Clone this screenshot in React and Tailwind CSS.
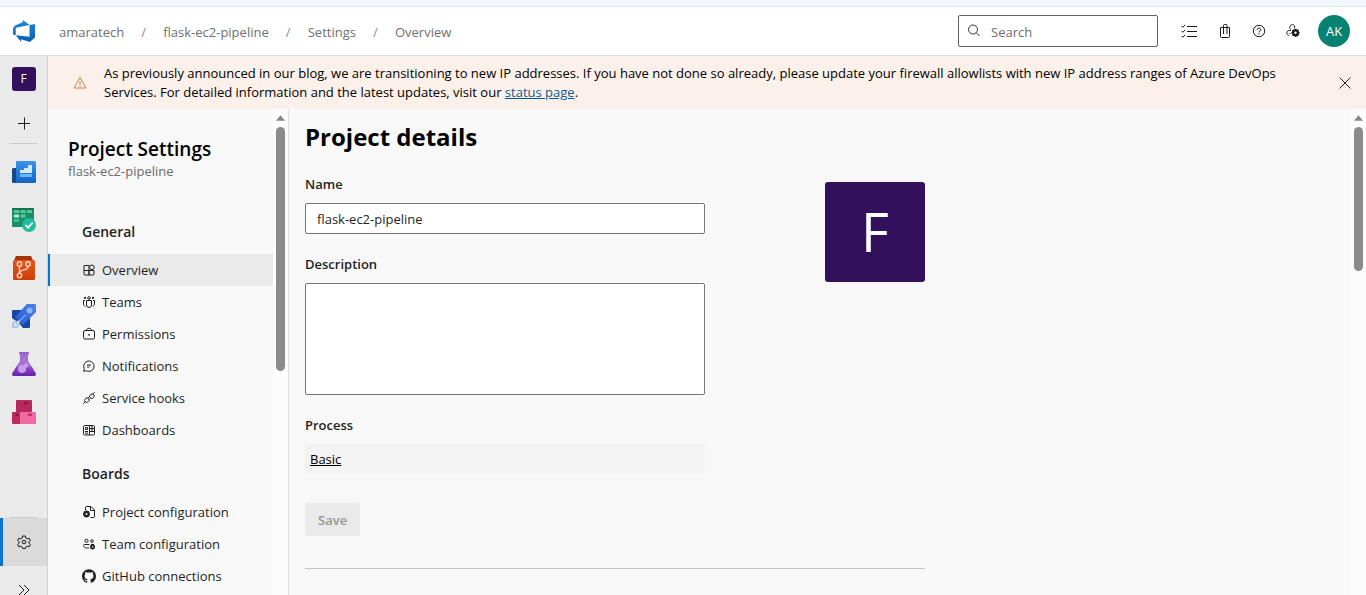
import React from "react";
import { SiGithub } from "react-icons/si";

function Line({ size = 14, box = 14, children, className = "" }) {
  return (
    <svg width={size} height={size} viewBox={`0 0 ${box} ${box}`} fill="none" stroke="currentColor" strokeWidth="1" className={`shrink-0 ${className}`} aria-hidden="true">
      {children}
    </svg>
  );
}

const gearTeeth = [0, 45, 90, 135];
function Gear({ x, y, r }) {
  return (
    <g>
      <circle cx={x} cy={y} r={r * 0.6} strokeWidth={r * 0.6} />
      {gearTeeth.map((a) => (
        <path key={a} d={`M${x} ${y - r}v${r * 0.35}M${x} ${y + r}v${-r * 0.35}`} strokeWidth={r * 0.45} transform={`rotate(${a} ${x} ${y})`} />
      ))}
    </g>
  );
}

function AzureLogo() {
  return (
    <svg width="22" height="22" viewBox="0 0 24 24" aria-hidden="true">
      <defs>
        <linearGradient id="logo" x1="0" y1="1" x2="0" y2="0">
          <stop offset="0" stopColor="#0b5fb4" />
          <stop offset="1" stopColor="#1a86dc" />
        </linearGradient>
      </defs>
      <path fill="url(#logo)" d="M0 8.877L2.247 5.91l8.405-3.416V.022l7.37 5.393L2.966 8.338v8.225L0 15.707zm24-4.45v14.651l-5.753 4.9-9.303-3.057v3.056l-5.978-7.416 15.057 1.798V5.415z" />
    </svg>
  );
}

function OverviewRail() {
  return (
    <svg width="24" height="24" viewBox="0 0 24 24" aria-hidden="true">
      <defs>
        <linearGradient id="ovw" x1="0" y1="0" x2="0" y2="1">
          <stop offset="0" stopColor="#3a94ee" />
          <stop offset="1" stopColor="#1263c4" />
        </linearGradient>
      </defs>
      <path d="M1.500 8H5v15H1.500A1.500 1.500 0 0 1 0 21.500v-12A1.500 1.500 0 0 1 1.500 8z" fill="#114a8c" />
      <path d="M5 1h17.500A1.500 1.500 0 0 1 24 2.500v19a1.500 1.500 0 0 1-1.500 1.500H2.500C4 22.700 4 21.500 4 20V2a1 1 0 0 1 1-1z" fill="url(#ovw)" />
      <path d="M8 10h4v3H8zM16 5h4v8h-4zM12 8h4v5h-4z" fill="#cfeaff" />
      <path d="M8 14h12v3H8z" fill="#66b6f7" />
    </svg>
  );
}

function BoardsRail() {
  return (
    <svg width="24" height="24" viewBox="0 0 24 24" aria-hidden="true">
      <rect x="0" y="0" width="22" height="19" rx="1" fill="#1c8f6a" />
      <path d="M0 1a1 1 0 0 1 1-1h20a1 1 0 0 1 1 1v1H0z" fill="#137353" />
      <path d="M2 2h5v3H2zM8.500 2h5v3h-5zM15 2h5v3h-5z" fill="#54c99c" />
      <path d="M2 6.500h5v3H2z" fill="#a3f3d5" />
      <path d="M8.500 6.500h5v3h-5z" fill="#54c99c" />
      <path d="M2 11h5v3H2z" fill="#46b98c" />
      <circle cx="17" cy="17" r="7" fill="#22bd9b" />
      <path d="M13.500 17l2.500 2.600 4.800-5" fill="none" stroke="#fff" strokeWidth="1.800" />
    </svg>
  );
}

function ReposRail() {
  return (
    <svg width="24" height="24" viewBox="0 0 24 24" aria-hidden="true">
      <defs>
        <linearGradient id="rep" x1="0" y1="0" x2="0" y2="1">
          <stop offset="0" stopColor="#e0561f" />
          <stop offset="1" stopColor="#cf3d08" />
        </linearGradient>
      </defs>
      <path d="M4.500 0h14a1 1 0 0 1 1 1L21 4.500H2L3.500 1a1 1 0 0 1 1-1z" fill="#a33408" />
      <path d="M1 5.500A1.500 1.500 0 0 1 2.500 4h19A1.500 1.500 0 0 1 23 5.500v17a1.500 1.500 0 0 1-1.500 1.500h-19A1.500 1.500 0 0 1 1 22.500z" fill="url(#rep)" />
      <g fill="none" stroke="#fbd3bf" strokeWidth="1.400">
        <circle cx="7.500" cy="8" r="2.200" />
        <circle cx="16" cy="8" r="2.200" />
        <circle cx="7.500" cy="19.500" r="2.200" />
        <path d="M7.500 10.200v7.100M16 10.200c0 5-8 2.500-8.500 7.100" />
      </g>
    </svg>
  );
}

function PipelinesRail() {
  return (
    <svg width="24" height="24" viewBox="0 0 24 24" aria-hidden="true">
      <defs>
        <linearGradient id="pip" x1="0" y1="1" x2="1" y2="0">
          <stop offset="0" stopColor="#2459c9" />
          <stop offset="1" stopColor="#4d83ee" />
        </linearGradient>
      </defs>
      <path d="M1 6h10L5 18 0 14V7a1 1 0 0 1 1-1zM18 12v11a1 1 0 0 1-1 1h-6l-4-5z" fill="#1747a6" />
      <path d="M15 0h8a1 1 0 0 1 1 1v7L11 21l-8-8z" fill="url(#pip)" />
      <circle cx="17.500" cy="6.500" r="3" fill="#8db1fa" />
      <path d="M13.500 11l-6.500 6.500" stroke="#7fa5f5" strokeWidth="1.500" />
      <path d="M0 18h2v4h4v2H0zM3 15.500l5.500 5.500-2 1.500L2 18z" fill="#a9c4f7" />
    </svg>
  );
}

function TestRail() {
  return (
    <svg width="24" height="24" viewBox="0 0 24 24" aria-hidden="true">
      <defs>
        <linearGradient id="tst" x1="0" y1="0" x2="0" y2="1">
          <stop offset="0" stopColor="#9450c8" />
          <stop offset="1" stopColor="#6420b0" />
        </linearGradient>
      </defs>
      <path d="M8 2h8v7l7.600 12c.9 1.500 0 3-1.600 3H2c-1.600 0-2.500-1.500-1.600-3L8 9z" fill="#a271d2" />
      <path d="M4.500 14.500h15l4 6.500c.9 1.500 0 3-1.500 3H2c-1.500 0-2.400-1.500-1.500-3z" fill="url(#tst)" />
      <rect x="7" y="0" width="10" height="2.500" rx="0.800" fill="#9a5fce" />
      <circle cx="10" cy="17" r="4" fill="#c79bef" />
      <circle cx="14" cy="13.500" r="2.300" fill="#c79bef" />
    </svg>
  );
}

function ArtifactsRail() {
  return (
    <svg width="24" height="24" viewBox="0 0 24 24" aria-hidden="true">
      <rect x="4" y="0" width="16" height="12" rx="0.800" fill="#b8295f" />
      <rect x="12" y="2" width="4" height="2.500" fill="#8f1746" />
      <rect x="0" y="12" width="8.500" height="12" rx="0.800" fill="#bb2a60" />
      <rect x="8" y="12" width="16" height="12" rx="0.800" fill="#ef6aa1" />
      <rect x="3.500" y="13.500" width="3" height="2.500" fill="#8f1746" />
      <rect x="16" y="13.500" width="4" height="2.500" fill="#c2306d" />
    </svg>
  );
}

const icons = {
  overview: (
    <Line>
      <path d="M2 2.500h5v5H2zM2 7.500h5v4.500H3a1 1 0 0 1-1-1zM7 7.500h5V11a1 1 0 0 1-1 1H7z" />
      <circle cx="9.900" cy="4.300" r="2.300" />
    </Line>
  ),
  teams: (
    <Line>
      <circle cx="7" cy="3" r="1.300" />
      <circle cx="3" cy="2.900" r="1.100" fill="currentColor" stroke="none" />
      <circle cx="11" cy="2.900" r="1.100" fill="currentColor" stroke="none" />
      <path d="M4.500 5.500h5V10a2.500 2.500 0 0 1-5 0zM3 5.500H1.500V9c0 1.200.7 2 1.800 2.200M11 5.500h1.500V9c0 1.200-.7 2-1.800 2.200" />
    </Line>
  ),
  permissions: (
    <Line>
      <rect x="1.500" y="3.500" width="11" height="8.500" rx="1.500" />
      <path d="M4.500 3.500C4.500.5 9.500.5 9.500 3.500" />
      <circle cx="7" cy="7.800" r="0.900" fill="currentColor" stroke="none" />
    </Line>
  ),
  notifications: (
    <Line>
      <path d="M1.700 12.300l.6-2.700A5.200 5.200 0 1 1 4.500 11.800zM5 6h4M5 8h2.500" />
    </Line>
  ),
  hooks: (
    <Line>
      <path d="M1.300 12.700l2-2M12.700 1.300l-2 2M7.200 5l1.700-1.600a2 2 0 0 1 2.800 2.800L10 7.900zM5 6.500L3 8.200A2 2 0 0 0 5.800 11l1.900-1.900zM5.800 7.200l1.400-1.400M7 8.500l1.400-1.400" />
    </Line>
  ),
  dashboards: (
    <Line>
      <rect x="1.500" y="2.500" width="11" height="9.500" rx="1.200" />
      <path d="M7.500 2.500V12M7.500 5.500h5M7.500 8.500h5M10 2.500v6M3.500 4.500h2v2h-2zM3 8.500h3M3 10.200h3" />
    </Line>
  ),
  projectConfig: (
    <Line>
      <path d="M3.500 5V2.500a1 1 0 0 1 1-1H9l3.500 3.500v6.500a1 1 0 0 1-1 1H8.500M8.500 1.500v4h4" />
      <Gear x={4.500} y={9} r={3.500} />
    </Line>
  ),
  teamConfig: (
    <Line>
      <circle cx="4.500" cy="3.800" r="1.600" />
      <circle cx="10" cy="4.100" r="1.300" />
      <path d="M7.500 7.500H2.200C1 7.500 1.200 11 4.500 11H7M9 7.500h3" />
      <Gear x={10.500} y={10} r={2.600} />
    </Line>
  ),
  github: <SiGithub size={14} className="shrink-0" aria-hidden="true" />,
};

const groups = [
  {
    title: "General",
    items: [
      ["overview", "Overview"],
      ["teams", "Teams"],
      ["permissions", "Permissions"],
      ["notifications", "Notifications"],
      ["hooks", "Service hooks"],
      ["dashboards", "Dashboards"],
    ],
  },
  {
    title: "Boards",
    items: [
      ["projectConfig", "Project configuration"],
      ["teamConfig", "Team configuration"],
      ["github", "GitHub connections"],
    ],
  },
];

const services = [
  ["Overview", OverviewRail],
  ["Boards", BoardsRail],
  ["Repos", ReposRail],
  ["Pipelines", PipelinesRail],
  ["Test Plans", TestRail],
  ["Artifacts", ArtifactsRail],
];

const crumbs = ["amaratech", "flask-ec2-pipeline", "Settings", "Overview"];

function ScrollTrack({ thumb }) {
  return (
    <div className="flex w-[15px] shrink-0 flex-col items-center bg-[#fcfcfc] pt-1.5" aria-hidden="true">
      <svg width="9" height="6" viewBox="0 0 10 6" className="mb-1.5 shrink-0">
        <path d="M5 0l5 6H0z" fill="#868686" />
      </svg>
      <div className={`w-[9px] shrink-0 rounded-full bg-[#8b8b8b] ${thumb}`} />
    </div>
  );
}

function Header() {
  return (
    <header className="flex h-[49px] shrink-0 items-center border-b border-[#dcdcdc] bg-white pl-[13px] pr-4">
      <a href="#home" aria-label="Azure DevOps" className="mr-6 shrink-0">
        <AzureLogo />
      </a>
      <nav aria-label="Breadcrumb" className="pt-0.5">
        <ol className="flex items-center text-[#6f6f6f]">
          {crumbs.map((c, i) => (
            <li key={c} className="flex">
              {i > 0 && <span className="w-[39px] text-center text-[#8a8a8a]">/</span>}
              <a href="#crumb">{c}</a>
            </li>
          ))}
        </ol>
      </nav>
      <label className="ml-auto mr-3 flex h-8 w-[200px] items-center gap-2.5 rounded-xs border border-[#616161] px-2 text-[#333]">
        <Line size={14}>
          <circle cx="6" cy="5.500" r="4.500" />
          <path d="M9.200 8.700l3.300 3.300" />
        </Line>
        <input type="search" aria-label="Search" placeholder="Search" className="w-full min-w-0 bg-transparent pt-0.5 outline-none placeholder:text-[#707070]" />
      </label>
      <div className="flex items-center text-[#1b1b1b]">
        <button aria-label="Work items" className="flex w-[38px] justify-center">
          <Line size={16} box={16}>
            <path d="M6 3.500h10M6 8.500h10M6 13.500h10M.5 3l1.300 1.300L4.300 1.800M.5 8l1.300 1.300 2.500-2.500M.5 13l1.300 1.300 2.500-2.500" />
          </Line>
        </button>
        <button aria-label="Marketplace" className="flex w-[34px] justify-center">
          <Line size={16} box={16}>
            <path d="M3.500 4.500h9v9a1 1 0 0 1-1 1h-7a1 1 0 0 1-1-1zM6.500 11V2.500a1 1 0 0 1 1-1h1.500a1 1 0 0 1 1 1V11" />
          </Line>
        </button>
        <button aria-label="Help" className="flex w-[34px] justify-center">
          <Line size={16} box={16}>
            <circle cx="8" cy="8" r="5.700" />
            <path d="M6.300 6.700a1.700 1.700 0 1 1 2.600 1.400c-.7.4-.9.700-.9 1.300" />
            <path d="M8 10.300v1.200" />
          </Line>
        </button>
        <button aria-label="User settings" className="flex w-[34px] justify-center">
          <Line size={16} box={16}>
            <path d="M5.500 6.500C3.700 4 5.300 1.700 7.300 1.700S10.500 3.500 9.300 5.200M6 7.500H4.200C1 7.500 1.200 12 4.200 12.500M5.500 10.500H4.500" />
            <Gear x={10.500} y={9.800} r={4} />
          </Line>
        </button>
        <button aria-label="Account" className="ml-2 flex size-8 items-center justify-center rounded-full bg-[#078272] text-white">AK</button>
      </div>
    </header>
  );
}

function Rail() {
  return (
    <nav aria-label="Services" className="flex w-12 shrink-0 flex-col border-r border-[#cfcfcf] bg-[#eaeaea] text-[#1b1b1b]">
      <a href="#project" className="flex h-[46px] shrink-0 items-center justify-center">
        <span className="flex size-6 items-center justify-center rounded-[3px] bg-[#32105c] text-xs text-white">F</span>
      </a>
      <button aria-label="Add" className="flex h-[41px] shrink-0 items-center justify-center">
        <Line size={14}>
          <path d="M1 7.500h12M7.500 1.500v12" />
        </Line>
      </button>
      <hr className="mx-2.5 mb-1 border-[#cbcbcb]" />
      {services.map(([name, Icon]) => (
        <a key={name} href="#service" aria-label={name} className="flex h-12 shrink-0 items-center justify-center">
          <Icon />
        </a>
      ))}
      <hr className="mx-2.5 mt-auto border-[#cbcbcb]" />
      <button aria-label="Project settings" className="flex h-12 shrink-0 items-center justify-center border-l-3 border-[#0a74cc] bg-[#dadada] pr-[3px]">
        <Line size={14}>
          <circle cx="7" cy="7" r="1.800" />
          <path d="M5.700 1h2.600l.4 1.900 1.500.9 1.900-.6 1.300 2.200-1.500 1.300v1.600l1.500 1.300-1.300 2.200-1.900-.6-1.500.9-.4 1.400H5.700l-.4-1.400-1.500-.9-1.900.6L.6 9.600l1.500-1.300V6.700L.6 5.400l1.300-2.200 1.900.6 1.500-.9z" strokeLinejoin="round" />
        </Line>
      </button>
      <button aria-label="Expand navigation" className="flex h-[29px] shrink-0 items-end justify-center overflow-hidden">
        <Line size={12} box={12}>
          <path d="M1 2l5 5-5 5M6 2l5 5-5 5" />
        </Line>
      </button>
    </nav>
  );
}

function Banner() {
  return (
    <div role="status" className="flex shrink-0 items-center bg-[#fbf1ea] pt-2 pb-[7px] pl-[25px] pr-3.5 text-black">
      <svg width="14" height="14" viewBox="0 0 14 14" fill="none" stroke="#b88a4a" className="mr-[17px] shrink-0" aria-hidden="true">
        <path d="M7 1.500L13 12H1z" strokeLinejoin="round" />
        <path d="M7 5v4M7 9.800v1.200" />
      </svg>
      <p className="flex-1 pr-6 leading-[19px]">
        As previously announced in our blog, we are transitioning to new IP addresses. If you have not done so already, please update your firewall allowlists with new IP address ranges of Azure DevOps Services. For detailed information and the latest updates, visit our{" "}
        <a href="#status" className="text-[#0b5a94] underline">status page</a>.
      </p>
      <button aria-label="Dismiss" className="shrink-0 text-[#222]">
        <Line size={14}>
          <path d="M1.500 1.500l11 11M12.500 1.500l-11 11" />
        </Line>
      </button>
    </div>
  );
}

function Sidebar() {
  return (
    <aside className="flex w-[241px] shrink-0 overflow-hidden border-r border-[#dedede]">
      <div className="flex-1 pt-[26px]">
        <h2 className="pl-5 text-[19px] leading-7 font-semibold text-black">Project Settings</h2>
        <p className="pl-5 leading-4 text-[#6b6b6b]">flask-ec2-pipeline</p>
        <nav aria-label="Project settings" className="mt-[34px]">
          {groups.map((g) => (
            <section key={g.title} className="mb-[9px]">
              <h3 className="flex h-[41px] items-center pb-1 pl-[34px] text-sm font-semibold">{g.title}</h3>
              {g.items.map(([icon, label]) => (
                <a
                  key={label}
                  href="#item"
                  className={`flex h-8 items-center gap-1.5 border-l-2 pl-8 whitespace-nowrap ${label === "Overview" ? "border-[#0a74cc] bg-[#eaeaea]" : "border-transparent"}`}
                >
                  {icons[icon]}
                  {label}
                </a>
              ))}
            </section>
          ))}
        </nav>
      </div>
      <ScrollTrack thumb="h-[244px]" />
    </aside>
  );
}

function Details() {
  return (
    <main className="flex min-w-0 flex-1 overflow-hidden">
      <div className="flex-1 pl-4 pt-2.5">
        <div className="max-w-[620px] border-b border-[#c4c4c4] pb-8">
          <h1 className="text-2xl leading-9 font-bold text-black">Project details</h1>
          <div className="mt-[19px] flex items-start justify-between">
            <form className="w-[400px]">
              <label htmlFor="name" className="block leading-5 font-semibold">Name</label>
              <input id="name" defaultValue="flask-ec2-pipeline" className="mt-[9px] block h-[31px] w-full rounded-xs border border-[#757575] bg-white px-[11px]" />
              <label htmlFor="description" className="mt-5 block leading-5 font-semibold">Description</label>
              <textarea id="description" className="mt-[9px] block h-28 w-full resize-none rounded-xs border border-[#757575] bg-white px-[11px]" />
              <h2 className="mt-5 leading-5 font-semibold">Process</h2>
              <div className="mt-[9px] flex h-[29px] items-center bg-[#f3f3f3] px-[5px]">
                <a href="#process" className="text-black underline">Basic</a>
              </div>
              <button type="button" disabled className="mt-[30px] h-[33px] rounded-xs bg-[#eaeaea] px-[13px] font-semibold text-[#979797]">Save</button>
            </form>
            <div className="mt-2 flex size-[100px] items-center justify-center rounded-[3px] bg-[#32105c] pb-0.5 text-[54px] text-white">F</div>
          </div>
        </div>
      </div>
      <ScrollTrack thumb="h-[144px]" />
    </main>
  );
}

export default function App() {
  return (
    <div className="flex h-screen flex-col overflow-hidden bg-[#f8f8f8] font-['Open_Sans','Noto_Sans',sans-serif] text-[13px] leading-5 text-[#1f1f1f]">
      <div className="h-[7px] shrink-0 border-b border-[#dde1e6] bg-[#f3f8fe]" />
      <Header />
      <div className="flex min-h-0 flex-1">
        <Rail />
        <div className="flex min-w-0 flex-1 flex-col">
          <Banner />
          <div className="flex min-h-0 flex-1">
            <Sidebar />
            <Details />
          </div>
        </div>
      </div>
    </div>
  );
}
